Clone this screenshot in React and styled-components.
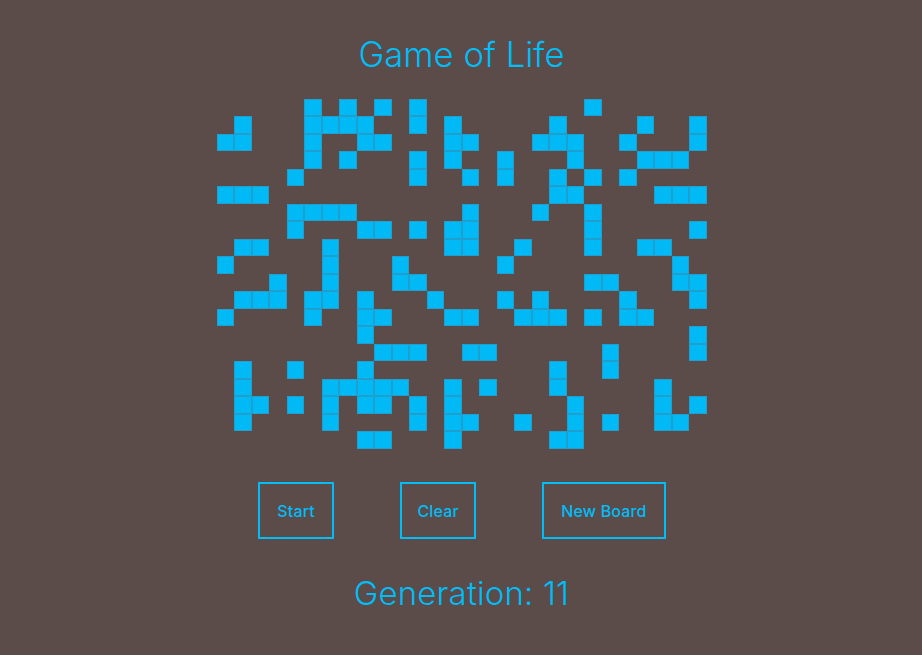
import React from "react";
import styled, { createGlobalStyle } from "styled-components";

const Global = createGlobalStyle`
  html, body { margin: 0; padding: 0; background: #5b4b49; }
`;

const Page = styled.div`
  width: 922px;
  height: 655px;
  background: #5b4b49;
  color: #00bdf8;
  font-family: Inter, "Noto Sans", sans-serif;
  display: flex;
  flex-direction: column;
  align-items: center;
  overflow: hidden;
`;

const Title = styled.h1`
  margin: 34px 0 0 1px;
  font-size: 34.7px;
  line-height: 41px;
  font-weight: 300;
`;

const Board = styled.div`
  margin: 23.5px 0 0 1px;
  display: grid;
  grid-template-columns: repeat(28, 17.5px);
  grid-template-rows: repeat(20, 17.5px);
`;

const Cell = styled.div`
  box-sizing: border-box;
  background: ${(p) => (p.$alive ? "#00b9f5" : "transparent")};
  border: 0.5px solid ${(p) => (p.$alive ? "#1f9fcd" : "transparent")};
`;

const Controls = styled.div`
  margin: 33.5px 0 0 2px;
  display: flex;
  gap: 66px;
`;

const Button = styled.button`
  box-sizing: border-box;
  height: 57px;
  padding: 0 ${(p) => p.$pad || 17}px;
  background: transparent;
  border: 2px solid #00bdf8;
  border-radius: 0;
  color: #00bdf8;
  font-family: inherit;
  font-size: 16px;
  font-weight: 500;
  letter-spacing: 0.15px;
`;

const Generation = styled.h2`
  margin: 33.5px 0 0 1px;
  font-size: 33px;
  line-height: 40px;
  font-weight: 300;
  letter-spacing: 0.15px;
`;

const rows = [
  [5, 7, 9, 11, 21],
  [1, 5, 6, 7, 8, 11, 13, 19, 24, 27],
  [0, 1, 5, 8, 9, 13, 14, 18, 19, 20, 23, 27],
  [5, 7, 11, 13, 16, 20, 24, 25, 26],
  [4, 11, 14, 16, 19, 21, 23],
  [0, 1, 2, 19, 20, 25, 26, 27],
  [4, 5, 6, 7, 14, 18, 21],
  [4, 8, 9, 11, 13, 14, 21, 27],
  [1, 2, 6, 13, 14, 17, 21, 24, 25],
  [0, 6, 10, 16, 26],
  [3, 6, 10, 11, 21, 22, 26, 27],
  [1, 2, 3, 5, 6, 8, 12, 16, 18, 23, 27],
  [0, 5, 8, 9, 13, 14, 17, 18, 19, 21, 23, 24],
  [8, 27],
  [9, 10, 11, 14, 15, 22, 27],
  [1, 4, 8, 19, 22],
  [1, 6, 7, 8, 9, 10, 13, 15, 19, 25],
  [1, 2, 4, 6, 8, 9, 11, 13, 20, 25, 27],
  [1, 6, 11, 13, 14, 17, 20, 22, 25, 26],
  [8, 9, 13, 19, 20],
];

export default function App() {
  return (
    <Page>
      <Global />
      <Title>Game of Life</Title>
      <Board>
        {rows.map((row, r) =>
          Array.from({ length: 28 }, (_, c) => (
            <Cell key={`${r}-${c}`} $alive={row.includes(c)} />
          ))
        )}
      </Board>
      <Controls>
        <Button>Start</Button>
        <Button $pad={15.5}>Clear</Button>
        <Button>New Board</Button>
      </Controls>
      <Generation>Generation: 11</Generation>
    </Page>
  );
}
